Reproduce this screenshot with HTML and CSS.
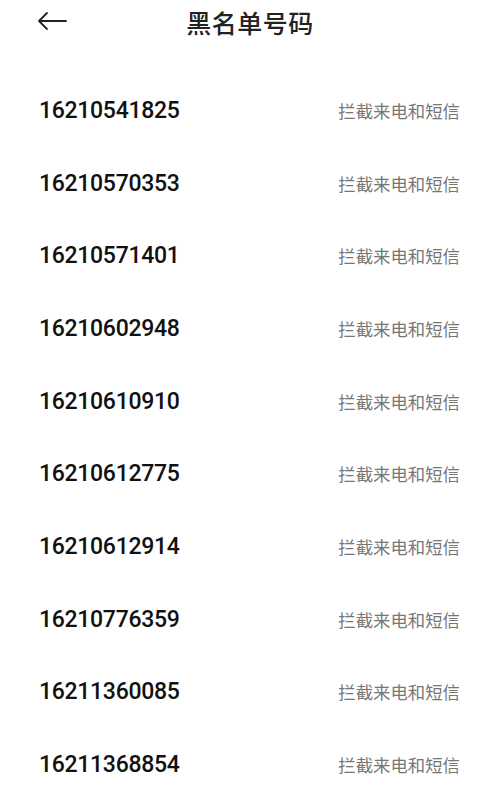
FILE: index.html
```html
<!DOCTYPE html>
<html lang="zh-CN">
<head>
    <meta charset="UTF-8">
    <meta name="viewport" content="width=device-width, initial-scale=1.0">
    <title>黑名单号码</title>
    <link rel="stylesheet" href="styles.css">
</head>
<body>
    <div class="header">
        <span class="back">
            <svg width="30" height="20" viewBox="0 0 30 20">
                <path d="M10 2 L2 10 L10 18 M2 10 L29 10" fill="none" stroke="#222" stroke-width="1.8" stroke-linecap="round" stroke-linejoin="round"/>
            </svg>
        </span>
        <h1>黑名单号码</h1>
    </div>

    <ul class="list">
        <li><span class="num">16210541825</span><span class="mode">拦截来电和短信</span></li>
        <li><span class="num">16210570353</span><span class="mode">拦截来电和短信</span></li>
        <li><span class="num">16210571401</span><span class="mode">拦截来电和短信</span></li>
        <li><span class="num">16210602948</span><span class="mode">拦截来电和短信</span></li>
        <li><span class="num">16210610910</span><span class="mode">拦截来电和短信</span></li>
        <li><span class="num">16210612775</span><span class="mode">拦截来电和短信</span></li>
        <li><span class="num">16210612914</span><span class="mode">拦截来电和短信</span></li>
        <li><span class="num">16210776359</span><span class="mode">拦截来电和短信</span></li>
        <li><span class="num">16211360085</span><span class="mode">拦截来电和短信</span></li>
        <li><span class="num">16211368854</span><span class="mode">拦截来电和短信</span></li>
    </ul>
</body>
</html>
```

FILE: styles.css
```css
body {
    margin: 0;
    padding: 0;
    background: #fff;
    font-family: Roboto, "Noto Sans CJK SC", sans-serif;
    overflow: hidden;
}
.header {
    position: relative;
    height: 44px;
    display: flex;
    align-items: center;
    justify-content: center;
}
.back {
    position: absolute;
    left: 37px;
    top: 11px;
    line-height: 0;
}
.header h1 {
    margin: 0;
    font-size: 25px;
    font-weight: 500;
    color: #222;
    letter-spacing: 0.5px;
}
.list {
    list-style: none;
    margin: 0;
    padding: 30px 0 0 0;
}
.list li {
    height: 72.7px;
    display: flex;
    align-items: center;
    justify-content: space-between;
    padding: 0 40px 0 39px;
}
.num {
    font-size: 23px;
    font-weight: 500;
    color: #111;
    letter-spacing: -0.3px;
}
.mode {
    font-size: 17.4px;
    color: #777;
}
```
